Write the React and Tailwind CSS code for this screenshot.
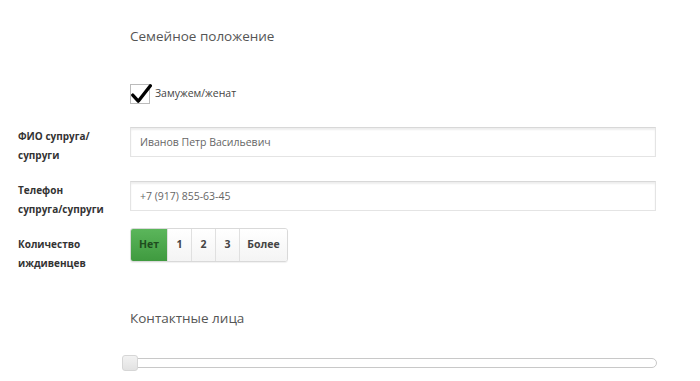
import React, { useState } from 'react';

const font = { fontFamily: '"Open Sans", "Noto Sans", sans-serif' };

export default function App() {
  const [married, setMarried] = useState(true);
  const [deps, setDeps] = useState('Нет');

  return (
    <div className="w-[700px] h-[381px] bg-white overflow-hidden text-[#333]" style={font}>
      <div className="pl-[130px] pt-[26px]">
        <h2 className="text-[13.5px] leading-[20px] text-[#555]">Семейное положение</h2>
      </div>

      <div className="pl-[130px] mt-[38px] flex items-center gap-[5px]">
        <button onClick={() => setMarried(!married)} className="relative w-[20px] h-[20px] border border-[#bbb] bg-white">
          {married && (
            <svg viewBox="0 0 20 20" className="absolute -left-[1px] -top-[2px] w-[22px] h-[22px]">
              <path d="M2.5 11 L7.5 16.5 L18.5 2.5" fill="none" stroke="#000" strokeWidth="3" strokeLinecap="round" strokeLinejoin="round" />
            </svg>
          )}
        </button>
        <span className="text-[10.5px] text-[#444]">Замужем/женат</span>
      </div>

      <div className="ml-[18px] mt-[23px] flex flex-col">
        <div className="flex">
          <FieldLabel lines={['ФИО супруга/', 'супруги']} />
          <Input value="Иванов Петр Васильевич" />
        </div>

        <div className="flex mt-[16px]">
          <FieldLabel lines={['Телефон', 'супруга/супруги']} />
          <Input value="+7 (917) 855-63-45" />
        </div>

        <div className="flex mt-[9px]">
          <div className="pt-[7px]">
            <FieldLabel lines={['Количество', 'иждивенцев']} />
          </div>
          <div>
            <div className="inline-flex rounded-[3px] border border-[#d9d9d9] shadow-[0_1px_1px_rgba(0,0,0,0.06)] overflow-hidden h-[34px]">
              {['Нет', '1', '2', '3', 'Более'].map((v, i) => (
                <button
                  key={v}
                  onClick={() => setDeps(v)}
                  className={`text-[10.5px] font-bold h-full ${i > 0 ? 'border-l border-[#e0e0e0]' : ''} ${
                    v === 'Нет' ? 'w-[36px]' : v === 'Более' ? 'w-[48px]' : 'w-[24px]'
                  } ${
                    deps === v
                      ? 'bg-gradient-to-b from-[#5bb65b] to-[#3f9a3f] text-[#1e4d1e]'
                      : 'bg-gradient-to-b from-white to-[#f4f4f4] text-[#444]'
                  }`}
                >
                  {v}
                </button>
              ))}
            </div>
          </div>
        </div>
      </div>

      <div className="pl-[130px] mt-[35px]">
        <h2 className="text-[13.5px] leading-[20px] text-[#555]">Контактные лица</h2>
      </div>

      <div className="ml-[122px] mt-[27px] w-[535px] relative h-[16px] flex items-center">
        <div className="w-full h-[10px] rounded-full border border-[#c8c8c8] bg-white" />
        <div className="absolute left-0 top-0 w-[16px] h-[16px] rounded-[3px] border border-[#d6d6d6] bg-gradient-to-b from-[#f2f2f2] to-[#e2e2e2]" />
      </div>
    </div>
  );
}

function FieldLabel({ lines }) {
  return (
    <div className="w-[112px] shrink-0 text-[10px] font-bold leading-[19px] text-[#333]">
      {lines.map((l) => (
        <div key={l}>{l}</div>
      ))}
    </div>
  );
}

function Input({ value }) {
  return (
    <input
      defaultValue={value}
      className="h-[30px] w-[526px] border border-[#e4e4e4] border-t-[#d8d8d8] shadow-[inset_0_2px_2px_rgba(0,0,0,0.07)] px-[9px] text-[10.5px] text-[#666] outline-none"
      style={font}
    />
  );
}
